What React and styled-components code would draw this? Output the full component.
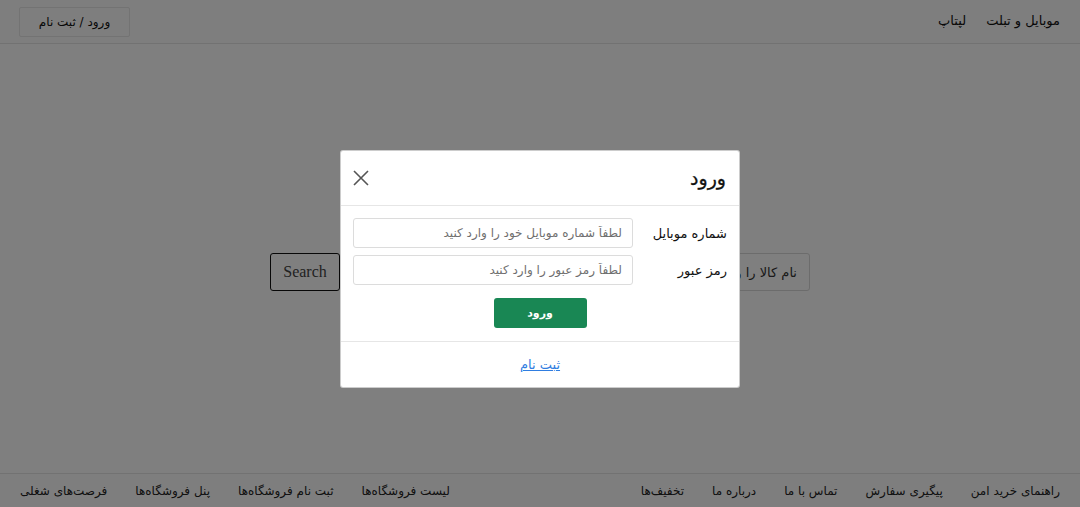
import React from 'react';
import styled, { createGlobalStyle } from 'styled-components';

// --------------------------------------
// Global
// --------------------------------------
const GlobalStyle = createGlobalStyle`
    html, body { margin: 0; padding: 0; }
    body {
        font-family: "DejaVu Sans", "Noto Sans", sans-serif;
        background: #fff;
        color: #212529;
    }
    * { box-sizing: border-box; }
`;

// --------------------------------------
// Component
// --------------------------------------
const App = () => {
    return (
        <>
            <GlobalStyle />
            <Page dir="rtl">
                <Header>
                    <NavLinks>
                        <NavLink>موبایل و تبلت</NavLink>
                        <NavLink>لپتاپ</NavLink>
                    </NavLinks>
                    <AuthButton>ورود / ثبت نام</AuthButton>
                </Header>

                <Main>
                    <SearchForm>
                        <SearchInput placeholder="نام کالا را وارد کنید" />
                        <SearchButton>Search</SearchButton>
                    </SearchForm>
                </Main>

                <Footer>
                    <FooterGroup>
                        <FooterLink>راهنمای خرید امن</FooterLink>
                        <FooterLink>پیگیری سفارش</FooterLink>
                        <FooterLink>تماس با ما</FooterLink>
                        <FooterLink>درباره ما</FooterLink>
                        <FooterLink>تخفیف‌ها</FooterLink>
                    </FooterGroup>
                    <FooterGroup>
                        <FooterLink>لیست فروشگاه‌ها</FooterLink>
                        <FooterLink>ثبت نام فروشگاه‌ها</FooterLink>
                        <FooterLink>پنل فروشگاه‌ها</FooterLink>
                        <FooterLink>فرصت‌های شغلی</FooterLink>
                    </FooterGroup>
                </Footer>

                <Backdrop>
                    <Modal>
                        <ModalHeader>
                            <ModalTitle>ورود</ModalTitle>
                            <CloseButton aria-label="close">
                                <svg width="16" height="16" viewBox="0 0 16 16">
                                    <path d="M1 1L15 15M15 1L1 15" stroke="#555" strokeWidth="1.6" fill="none" />
                                </svg>
                            </CloseButton>
                        </ModalHeader>

                        <ModalBody>
                            <FieldRow>
                                <FieldLabel>شماره موبایل</FieldLabel>
                                <FieldInput placeholder="لطفاً شماره موبایل خود را وارد کنید" />
                            </FieldRow>
                            <FieldRow>
                                <FieldLabel>رمز عبور</FieldLabel>
                                <FieldInput type="password" placeholder="لطفاً رمز عبور را وارد کنید" />
                            </FieldRow>
                            <SubmitRow>
                                <SubmitButton>ورود</SubmitButton>
                            </SubmitRow>
                        </ModalBody>

                        <ModalFooter>
                            <RegisterLink href="#">ثبت نام</RegisterLink>
                        </ModalFooter>
                    </Modal>
                </Backdrop>
            </Page>
        </>
    );
};

// --------------------------------------
// Styles
// --------------------------------------
const Page = styled.div`
    position: relative;
    height: 100vh;
    display: flex;
    flex-direction: column;
    overflow: hidden;
`;

const Header = styled.header`
    height: 44px;
    padding: 7px 20px 0 19px;
    display: flex;
    justify-content: space-between;
    align-items: flex-start;
    border-bottom: 1px solid #e4e4e4;
    background: #fdfdfd;
`;

const NavLinks = styled.nav`
    display: flex;
    gap: 20px;
    padding-top: 6px;
`;

const NavLink = styled.a`
    font-size: 13px;
    color: #111;
`;

const AuthButton = styled.button`
    font-family: inherit;
    width: 111px;
    height: 30px;
    padding: 0;
    font-size: 12px;
    color: #111;
    background: #fdfdfd;
    border: 1px solid #e6e6e6;
    border-radius: 2px;
`;

const Main = styled.main`
    flex: 1;
    display: flex;
    justify-content: center;
    align-items: center;
    padding-top: 27px;
`;

const SearchForm = styled.form`
    display: flex;
    width: 540px;
    gap: 2px;
`;

const SearchInput = styled.input`
    flex: 1;
    height: 38px;
    border: 1px solid #d8d8d8;
    border-radius: 3px;
    padding: 0 12px;
    font-family: inherit;
    font-size: 13px;
    &::placeholder { color: #333; }
`;

const SearchButton = styled.button`
    width: 70px;
    height: 38px;
    font-family: "Liberation Serif", serif;
    font-size: 16px;
    color: #444;
    background: #fff;
    border: 1px solid #111;
    border-radius: 3px;
`;

const Footer = styled.footer`
    height: 34px;
    padding: 0 20px;
    display: flex;
    justify-content: space-between;
    align-items: center;
    border-top: 1px solid #e4e4e4;
    background: #fdfdfd;
`;

const FooterGroup = styled.div`
    display: flex;
    gap: 28px;
`;

const FooterLink = styled.a`
    font-size: 12px;
    color: #222;
`;

const Backdrop = styled.div`
    position: absolute;
    inset: 0;
    background: rgba(0, 0, 0, 0.5);
    display: flex;
    justify-content: center;
    align-items: flex-start;
    padding-top: 150px;
`;

const Modal = styled.div`
    width: 400px;
    background: #fff;
    border: 1px solid rgba(0, 0, 0, 0.2);
    border-radius: 3px;
    display: flex;
    flex-direction: column;
`;

const ModalHeader = styled.div`
    height: 55px;
    padding: 0 13px 0 11px;
    display: flex;
    justify-content: space-between;
    align-items: center;
    border-bottom: 1px solid #e6e6e6;
`;

const ModalTitle = styled.h5`
    margin: 0;
    font-size: 19px;
    font-weight: 400;
    color: #111;
    -webkit-text-stroke: 0.3px #111;
`;

const CloseButton = styled.button`
    width: 18px;
    height: 18px;
    padding: 0;
    border: 0;
    background: none;
    display: flex;
    align-items: center;
    justify-content: center;
`;

const ModalBody = styled.div`
    padding: 12px 12px 13px;
    display: flex;
    flex-direction: column;
    gap: 7px;
`;

const FieldRow = styled.div`
    display: flex;
    align-items: center;
`;

const FieldLabel = styled.label`
    width: 94px;
    font-size: 13px;
    color: #111;
`;

const FieldInput = styled.input`
    flex: 1;
    height: 30px;
    padding: 0 10px;
    border: 1px solid #dcdcdc;
    border-radius: 3px;
    font-family: inherit;
    font-size: 12px;
    &::placeholder { color: #6f6f6f; }
`;

const SubmitRow = styled.div`
    display: flex;
    justify-content: center;
    padding-top: 6px;
`;

const SubmitButton = styled.button`
    width: 93px;
    height: 30px;
    border: 0;
    border-radius: 3px;
    background: #198754;
    color: #fff;
    font-family: inherit;
    font-size: 11px;
    font-weight: 700;
`;

const ModalFooter = styled.div`
    height: 46px;
    display: flex;
    justify-content: center;
    align-items: center;
    border-top: 1px solid #e6e6e6;
`;

const RegisterLink = styled.a`
    font-size: 13px;
    color: #2f7de1;
    text-decoration: underline;
`;

export default App;
